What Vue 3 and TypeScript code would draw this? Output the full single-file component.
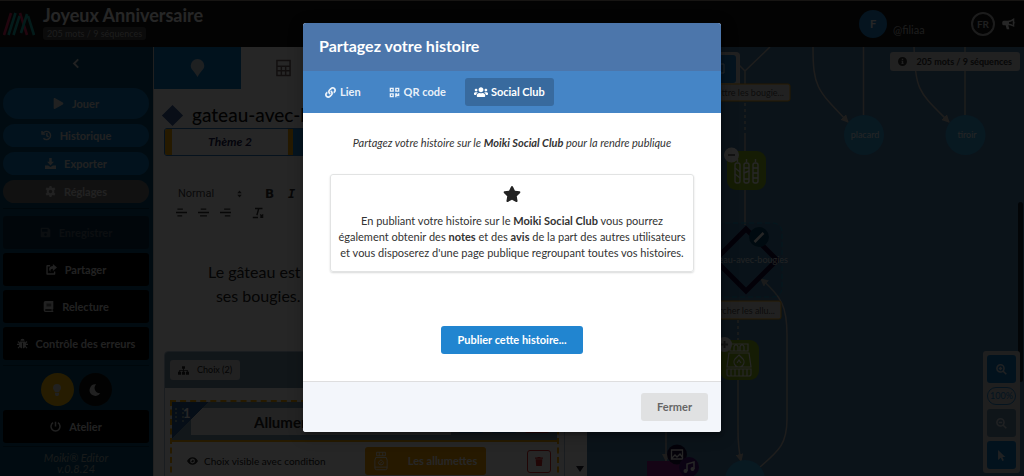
<script setup lang="ts">
import { h, ref } from 'vue'

type Glyph = { box: string; d: string; stroke?: number }

const glyphs: Record<string, Glyph> = {
  play: { box: '0 0 448 512', d: 'M424.4 214.7L72.4 6.6C43.8-10.3 0 6.1 0 47.9V464c0 37.5 40.7 60.1 72.4 41.3l352-208c31.4-18.5 31.5-64.1 0-82.6z' },
  star: { box: '0 0 576 512', d: 'M259.3 17.8L194 150.2 47.9 171.5c-26.2 3.8-36.7 36.1-17.7 54.6l105.7 103-25 145.5c-4.5 26.3 23.2 46 46.4 33.7L288 439.6l130.7 68.7c23.2 12.2 50.9-7.4 46.4-33.7l-25-145.5 105.7-103c19-18.5 8.5-50.8-17.7-54.6L382 150.2 316.7 17.8c-11.7-23.6-45.6-23.9-57.4 0z' },
  link: { box: '0 0 512 512', d: 'M326.612 185.391c59.747 59.809 58.927 155.698.36 214.59-.11.12-.24.25-.36.37l-67.2 67.2c-59.27 59.27-155.699 59.262-214.96 0-59.27-59.26-59.27-155.7 0-214.96l37.106-37.106c9.84-9.84 26.786-3.3 27.294 10.606.648 17.722 3.826 35.527 9.69 52.721 1.986 5.822.567 12.262-3.783 16.612l-13.087 13.087c-28.026 28.026-28.905 73.66-1.155 101.96 28.024 28.579 74.086 28.749 102.325.51l67.2-67.19c28.191-28.191 28.073-73.757 0-101.83-3.701-3.694-7.429-6.564-10.341-8.569a16.037 16.037 0 0 1-6.947-12.606c-.396-10.567 3.348-21.456 11.698-29.806l21.054-21.055c5.521-5.521 14.182-6.199 20.584-1.731a152.482 152.482 0 0 1 20.522 17.197zM467.547 44.449c-59.261-59.262-155.69-59.27-214.96 0l-67.2 67.2c-.12.12-.25.25-.36.37-58.566 58.892-59.387 154.781.36 214.59a152.454 152.454 0 0 0 20.521 17.196c6.402 4.468 15.064 3.789 20.584-1.731l21.054-21.055c8.35-8.35 12.094-19.239 11.698-29.806a16.037 16.037 0 0 0-6.947-12.606c-2.912-2.005-6.64-4.875-10.341-8.569-28.073-28.073-28.191-73.639 0-101.83l67.2-67.19c28.239-28.239 74.3-28.069 102.325.51 27.75 28.3 26.872 73.934-1.155 101.96l-13.087 13.087c-4.35 4.35-5.769 10.79-3.783 16.612 5.864 17.194 9.042 34.999 9.69 52.721.509 13.906 17.454 20.446 27.294 10.606l37.106-37.106c59.271-59.259 59.271-155.699.001-214.959z' },
  users: { box: '0 60 640 420', d: 'M96 224c35.3 0 64-28.7 64-64s-28.7-64-64-64-64 28.700-64 64 28.700 64 64 64zm448 0c35.300 0 64-28.700 64-64s-28.700-64-64-64-64 28.700-64 64 28.700 64 64 64zm32 32h-64c-17.600 0-33.500 7.100-45.100 18.600 40.300 22.100 68.900 62 75.100 109.400h66c17.700 0 32-14.300 32-32v-32c0-35.300-28.700-64-64-64zm-256 0c61.900 0 112-50.100 112-112S381.900 32 320 32 208 82.100 208 144s50.100 112 112 112zm76.800 32h-8.300c-20.800 10-43.900 16-68.500 16s-47.600-6-68.500-16h-8.300C179.600 288 128 339.600 128 403.200V432c0 26.500 21.500 48 48 48h288c26.500 0 48-21.500 48-48v-28.800c0-63.600-51.600-115.200-115.200-115.200zm-223.700-13.400C161.500 263.100 145.600 256 128 256H64c-35.300 0-64 28.700-64 64v32c0 17.700 14.300 32 32 32h65.900c6.300-47.400 34.900-87.300 75.200-109.400z' },
  qr: { box: '0 0 16 16', d: 'M1 1h6v6H1zM3 3v2h2V3zM9 1h6v6H9zM11 3v2h2V3zM1 9h6v6H1zM3 11v2h2v-2zM9 9h3v2h1V9h2v4h-4v2H9zM12 14h1v1h-1zM14 14h1v1h-1z' },
  left: { box: '0 0 16 16', d: 'M10.500 2L4.500 8l6 6', stroke: 2.8 },
  history: { box: '0 0 16 16', d: 'M3 4.500A6 6 0 1 1 3.500 12M1.500 1.500V6H6M8.500 4.500V8.500L11 10', stroke: 2 },
  download: { box: '0 0 16 16', d: 'M6.200 0h3.600v5.500H13L8 10.800 3 5.500h3.200zM0 11h4.500l3.500 2 3.500-2H16v5H0z' },
  cog: { box: '0 0 16 16', d: 'M6.600 0h2.800l.5 2.200 1.500.8 2.200-.7L15 4.700l-1.600 1.600v1.700 1.700L15 11.300l-1.400 2.400-2.200-.7-1.500.8-.5 2.200H6.600l-.5-2.200-1.500-.8-2.200.7L1 11.300l1.600-1.600V6.300L1 4.700l1.400-2.400 2.200.7 1.500-.8zM8 5.400a2.600 2.600 0 1 0 0 5.200 2.600 2.600 0 0 0 0-5.200z' },
  save: { box: '0 0 16 16', d: 'M2.500 1H12l3 3v9.500A1.500 1.500 0 0 1 13.500 15h-11A1.500 1.500 0 0 1 1 13.500v-11A1.500 1.500 0 0 1 2.500 1zM3 3v4h8V3zM8 9a2 2 0 1 0 0 4 2 2 0 0 0 0-4z' },
  share: { box: '0 0 16 16', d: 'M10 0l6 5-6 5V7C7 7 6 8 6.500 11.500 3 8 4.500 3.200 10 3zM2 1.500h4v2H2.500v10h9V11h2v3.500a1 1 0 0 1-1 1H1.500a1 1 0 0 1-1-1V3a1.500 1.500 0 0 1 1.500-1.500z' },
  book: { box: '0 0 16 16', d: 'M3.500 0H15v12h-1v2h1v2H3.500A2.500 2.500 0 0 1 1 13.500v-11A2.500 2.500 0 0 1 3.500 0zM5 4v1h7V4zM5 6.500v1h7v-1zM4 12a1 1 0 0 0 0 2h8.500v-2z' },
  bug: { box: '0 0 16 16', d: 'M5 4a3 3 0 0 1 6 0zM4 5h8v1.500l2-2 1.200 1.200L13 8v.5h3v1.700h-3l-.3 1.300 2.500 2.500-1.200 1.200-2.200-2C11 14.500 10 15 8.600 15V7H7.400v8C6 15 5 14.500 4.200 13.200l-2.200 2L.8 14l2.500-2.500L3 10.200H0V8.500h3V8L.8 5.700 2 4.500l2 2z' },
  bulb: { box: '0 0 16 16', d: 'M8 0a5.300 5.300 0 0 0-5.300 5.300C2.700 8 5 8.500 5.200 11h5.600c.2-2.500 2.500-3 2.500-5.700A5.300 5.300 0 0 0 8 0zM5.300 12h5.400v2L9.500 16h-3l-1.200-2z' },
  moon: { box: '0 0 16 16', d: 'M9.500.4A7.700 7.700 0 1 0 15 12.300 7 7 0 0 1 9.500.4z' },
  power: { box: '0 0 16 16', d: 'M4.500 2.500a6.500 6.500 0 1 0 7 0M8 1v7', stroke: 2.2 },
  pin: { box: '0 0 16 20', d: 'M8 0a7.500 7.500 0 0 0-7.500 7.500C.5 11.500 4 13 8 20c4-7 7.500-8.500 7.500-12.500A7.500 7.500 0 0 0 8 0z' },
  calc: { box: '0 0 16 18', d: 'M1 1h14v16H1zM1 7h14M1 12h14M5.700 7v10M10.300 7v10', stroke: 1.600 },
  sort: { box: '0 0 10 16', d: 'M5 1l4.500 5.500h-9zM5 15L.5 9.500h9z' },
  alignLeft: { box: '0 0 16 16', d: 'M2 3h8M0 8h16M2 13h7', stroke: 1.900 },
  alignCenter: { box: '0 0 16 16', d: 'M4 3h8M0 8h16M3 13h10', stroke: 1.900 },
  alignRight: { box: '0 0 16 16', d: 'M6 3h9M0 8h16M7 13h8', stroke: 1.900 },
  clean: { box: '0 0 16 16', d: 'M4 2h10M9 2L6.500 11M1 14h7M11 10l4 4M15 10l-4 4', stroke: 1.900 },
  sitemap: { box: '0 0 18 14', d: 'M6.500 0h5v4H9.700v2H16v3h2v5h-5V9h1.500V7.500H9.700V9h1.800v5h-5V9h1.800V7.500H3.500V9H5v5H0V9h2V6h6.300V4H6.500z' },
  eye: { box: '0 0 18 12', d: 'M9 0c4 0 7 2.500 9 6-2 3.500-5 6-9 6S2 9.500 0 6c2-3.500 5-6 9-6zM9 2a4 4 0 1 0 0 8 4 4 0 0 0 0-8zM9 4a2 2 0 1 1-2 2c1 0 2-.6 2-2z' },
  trash: { box: '0 0 14 16', d: 'M0 1h4l1-1h4l1 1h4v2H0zM1 4h12l-1 12H2z' },
  jar: { box: '0 0 16 22', d: 'M3 1h10v4H3zM6 1v4M10 1v4M2 7h12l1 3v9a2 2 0 0 1-2 2H3a2 2 0 0 1-2-2v-9zM1 18h14M8 9.500l3 3a3 3 0 1 1-6 0zM7 14l2-2', stroke: 1 },
  horn: { box: '0 0 18 16', d: 'M16 0v12C13 10 11 9.500 8 9.500l1.500 5.500H6L4.500 9.500H2A2 2 0 0 1 0 7.500v-2a2 2 0 0 1 2-2h5C10.500 3.500 13 2 16 0zM14 3.500c-2 1.200-3.500 1.600-5 1.700v2.600c2 .1 3.500.5 5 1.400zM16.500 4.500a2 2 0 0 1 0 3z' },
  info: { box: '0 0 16 16', d: 'M8 0a8 8 0 1 0 0 16A8 8 0 0 0 8 0zM6.800 3h2.400v2.200H6.800zM6 6.500h3.200V11H10v1.500H6V11h.8V8H6z' },
  zoomIn: { box: '0 0 16 16', d: 'M6.500 1.200a5.200 5.200 0 1 0 0 10.400 5.200 5.200 0 0 0 0-10.400zM10.500 10.500L15 15M4 6.400h5M6.500 4v5', stroke: 2.2 },
  zoomOut: { box: '0 0 16 16', d: 'M6.500 1.200a5.200 5.200 0 1 0 0 10.400 5.200 5.200 0 0 0 0-10.400zM10.500 10.500L15 15M4 6.400h5', stroke: 2.2 },
  pointer: { box: '0 0 12 16', d: 'M1 0l10.500 10.300H7.300l2.200 4.700-2.300 1-2.200-4.800L1 14.500z' }
}

const Icon = (props: { name: string }) => {
  const g = glyphs[props.name]
  return h('svg', { viewBox: g.box, 'aria-hidden': 'true' }, [
    h('path', g.stroke
      ? { d: g.d, fill: 'none', stroke: 'currentColor', 'stroke-width': g.stroke }
      : { d: g.d, fill: 'currentColor', 'fill-rule': 'evenodd' })
  ])
}
Icon.props = ['name']

const pills = [
  { label: 'Jouer', icon: 'play', kind: 'tall' },
  { label: 'Historique', icon: 'history', kind: '' },
  { label: 'Exporter', icon: 'download', kind: '' },
  { label: 'Réglages', icon: 'cog', kind: 'grey' }
]
const actions = [
  { label: 'Enregistrer', icon: 'save', disabled: true },
  { label: 'Partager', icon: 'share', disabled: false },
  { label: 'Relecture', icon: 'book', disabled: false },
  { label: 'Contrôle des erreurs', icon: 'bug', disabled: false }
]
const tabs = [
  { id: 'link', label: 'Lien', icon: 'link' },
  { id: 'qr', label: 'QR code', icon: 'qr' },
  { id: 'club', label: 'Social Club', icon: 'users' }
]
const activeTab = ref('club')
const choiceTitle = ref('Allumer')
</script>

<template>
  <div class="app">
    <header class="topbar">
      <svg class="logo" viewBox="0 0 32 24" aria-hidden="true">
        <g fill="none" stroke-width="2.600">
          <path d="M1 23L8 1M17 1l7 22" stroke="#e0255f" />
          <path d="M5.500 23l7-22M10.500 23l6-19M24 2l-6 19M25 4l6 19" stroke="#18b5b0" />
        </g>
      </svg>
      <div class="story">
        <h1>Joyeux Anniversaire</h1>
        <span class="count">205 mots / 9 séquences</span>
      </div>
      <span class="avatar">F</span>
      <span class="user">@filiaa</span>
      <button class="lang">FR</button>
      <button class="news" aria-label="Annonces"><Icon name="horn" /></button>
    </header>

    <div class="workspace">
      <nav class="sidebar">
        <button class="collapse" aria-label="Replier"><Icon name="left" /></button>
        <div class="stack pills">
          <button v-for="p in pills" :key="p.label" :class="['pill', p.kind]"><Icon :name="p.icon" />{{ p.label }}</button>
        </div>
        <hr />
        <div class="stack">
          <button v-for="a in actions" :key="a.label" class="block" :disabled="a.disabled"><Icon :name="a.icon" />{{ a.label }}</button>
        </div>
        <hr />
        <div class="modes">
          <button class="round light" aria-label="Clair"><Icon name="bulb" /></button>
          <button class="round" aria-label="Sombre"><Icon name="moon" /></button>
        </div>
        <button class="block"><Icon name="power" />Atelier</button>
        <hr class="tight" />
        <p class="version">Moiki® Editor<br />v.0.8.24</p>
      </nav>

      <main class="editor">
        <div class="modebar">
          <button class="on" aria-label="Séquence"><Icon name="pin" /></button>
          <button aria-label="Variables"><Icon name="calc" /></button>
        </div>
        <div class="sheet">
          <h2><i class="diamond"></i>gateau-avec-bougies</h2>
          <div class="themes">
            <button class="theme">Thème 2</button>
          </div>
          <div class="toolbar">
            <div class="tools">
              <span class="format">Normal <Icon name="sort" /></span>
              <button class="mark">B</button>
              <button class="mark slanted">I</button>
            </div>
            <div class="tools">
              <button aria-label="Gauche"><Icon name="alignLeft" /></button>
              <button aria-label="Centre"><Icon name="alignCenter" /></button>
              <button aria-label="Droite"><Icon name="alignRight" /></button>
              <button class="clean" aria-label="Effacer le style"><Icon name="clean" /></button>
            </div>
          </div>
          <p class="prose">Le gâteau est<br />ses bougies.</p>
          <section class="choices">
            <div class="choices-head"><button><Icon name="sitemap" />Choix (2)</button></div>
            <article class="choice">
              <div class="choice-head">
                <span class="rank">1</span>
                <input v-model="choiceTitle" aria-label="Titre du choix" />
                <span class="chip"></span><span class="chip"></span><span class="chip outline"></span>
              </div>
              <div class="condition">
                <Icon name="eye" />
                <span>Choix visible avec condition</span>
                <button class="object"><Icon name="jar" />Les allumettes</button>
                <button class="delete" aria-label="Supprimer"><Icon name="trash" /></button>
              </div>
            </article>
          </section>
        </div>
        <i class="scroll-down"></i>
      </main>

      <section class="canvas">
        <svg class="graph" aria-hidden="true">
          <defs>
            <marker id="tip" viewBox="0 0 8 8" refX="7" refY="4" markerWidth="8" markerHeight="8" markerUnits="userSpaceOnUse" orient="auto">
              <path d="M0 0l8 4-8 4z" fill="#c9c3bb" />
            </marker>
          </defs>
          <g transform="translate(-587 -47)">
            <g class="edges">
              <path d="M770 47l-25 24-10-10M745 71V84" />
              <path d="M745 103v32" stroke-dasharray="3 3" />
              <path d="M745 135v90" />
              <path d="M813 47c0 40 4 43 35 75" marker-end="url(#tip)" />
              <path d="M863.500 47v68M965 47v68" />
              <path d="M914 47c2 45 4 44 35 75" marker-end="url(#tip)" />
              <path d="M738 320v20" stroke-dasharray="3 3" />
              <path d="M738 380v50c0 15 1 22 3 31" marker-end="url(#tip)" />
              <path d="M760 467c20-17 27-24 27-48v-84c0-28-5-38-26-56" marker-end="url(#tip)" />
              <path d="M666 420v41" marker-end="url(#tip)" />
            </g>
            <rect x="695" y="52" width="45" height="42" rx="4" fill="#ddd" />
            <rect x="700" y="55" width="36" height="28" rx="3" fill="#2185d0" />
            <path d="M720 64h4v9h-4" fill="none" stroke="#fff" />
            <rect x="680" y="84" width="110" height="17" rx="2" fill="#ddd" stroke="#f2a50c" />
            <g fill="#38a5dc"><circle cx="864" cy="135" r="20" /><circle cx="965.500" cy="135" r="20" /><circle cx="745" cy="480" r="20" /></g>
            <g fill="#e6f2fa" text-anchor="middle"><text x="865" y="138">placard</text><text x="967" y="138">tiroir</text></g>
            <rect x="727" y="151" width="39" height="39" rx="9" fill="#8cb81e" />
            <g fill="none" stroke="#fff" stroke-width="1.400">
              <rect x="735" y="163" width="5" height="20" rx="2" /><rect x="744" y="163" width="5" height="20" rx="2" /><rect x="753" y="163" width="5" height="20" rx="2" />
              <path d="M737.500 162v-3M746.500 162v-3M755.500 162v-3M735 168l5 4M735 174l5 4M744 168h5M744 173l5-2M744 179h5M753 168h5M753 173h5M753 178h5" />
            </g>
            <circle cx="731.500" cy="155" r="7.500" fill="#fff" /><path d="M728 155h7" stroke="#777" stroke-width="2" />
            <rect x="708" y="223" width="74" height="74" rx="9" fill="#0d6b9c" fill-opacity=".15" stroke="#159fc9" stroke-dasharray="5 3" />
            <path d="M746 229l31 31-31 31-31-31z" fill="none" stroke="#1a0a3a" stroke-width="5" />
            <circle cx="759" cy="237" r="10" fill="#06456a" /><path d="M754.500 242l9-9" stroke="#fff" stroke-width="2.500" />
            <text x="788" y="263" text-anchor="end" fill="#dfe3ea">gateau-avec-bougies</text>
            <rect x="680" y="301" width="101" height="18" rx="2" fill="#ddd" stroke="#f2a50c" />
            <g fill="#555"><text x="784" y="96" text-anchor="end">Mettre les bougie...</text><text x="775" y="314" text-anchor="end">Chercher les allu...</text></g>
            <rect x="720" y="340" width="39" height="40" rx="9" fill="#8cb81e" />
            <g fill="none" stroke="#fff" stroke-width="1.200">
              <path d="M730 344h18v7h-18zM734 351v-4a2 2 0 0 1 4 0v4M740 351v-4a2 2 0 0 1 4 0v4M729 353h20l2 14h-24zM727 369h24v5a2 2 0 0 1-2 2h-20a2 2 0 0 1-2-2zM731 369v7M735 369v7M739 369v7M743 369v7M747 369v7M739 355l4 4a5 5 0 1 1-8 0zM737 363l2-3 2 3" />
            </g>
            <circle cx="724.500" cy="344.500" r="7.500" fill="#fff" /><path d="M721 344.500h7M724.500 341v7" stroke="#777" stroke-width="2" />
            <rect x="647" y="461" width="40" height="30" fill="#8a1f8c" />
            <circle cx="677" cy="454.500" r="10" fill="#1c1240" />
            <path d="M671.500 450h11v9h-11zM672 458l3-3 2 2 3-3 3 4" fill="none" stroke="#fff" stroke-width="1.300" />
            <circle cx="689" cy="467" r="10" fill="#491580" />
            <path d="M687 471v-7l7-2v7" fill="none" stroke="#fff" stroke-width="1.500" /><circle cx="685.500" cy="471" r="2" fill="#fff" /><circle cx="692.500" cy="469" r="2" fill="#fff" />
          </g>
        </svg>
        <div class="counter"><Icon name="info" />205 mots / 9 séquences</div>
        <i class="rail"></i>
        <div class="zoom">
          <button aria-label="Agrandir"><Icon name="zoomIn" /></button>
          <span>100%</span>
          <button aria-label="Réduire" disabled><Icon name="zoomOut" /></button>
          <button aria-label="Pointeur"><Icon name="pointer" /></button>
        </div>
      </section>
    </div>

    <div class="dimmer">
      <div class="modal" role="dialog" aria-modal="true" aria-labelledby="share-title">
        <h2 id="share-title">Partagez votre histoire</h2>
        <div class="tabs" role="tablist">
          <button v-for="t in tabs" :key="t.id" role="tab" :aria-selected="activeTab === t.id" :class="{ active: activeTab === t.id }" @click="activeTab = t.id">
            <Icon :name="t.icon" />{{ t.label }}
          </button>
        </div>
        <div class="body">
          <p class="intro">Partagez votre histoire sur le <b>Moiki Social Club</b> pour la rendre publique</p>
          <div class="card">
            <Icon name="star" />
            <p>En publiant votre histoire sur le <b>Moiki Social Club</b> vous pourrez également obtenir des <b>notes</b> et des <b>avis</b> de la part des autres utilisateurs et vous disposerez d'une page publique regroupant toutes vos histoires.</p>
          </div>
          <button class="publish">Publier cette histoire...</button>
        </div>
        <footer><button class="close">Fermer</button></footer>
      </div>
    </div>
  </div>
</template>

<style>
body { margin: 0; background: #fff; }
</style>

<style scoped>
* { box-sizing: border-box; }
.app { position: relative; height: 100vh; overflow: hidden; display: flex; flex-direction: column; font: 11px/16px Lato, "Liberation Sans", sans-serif; color: #222; }
button, input { font: inherit; color: inherit; margin: 0; padding: 0; border: 0; background: none; }
button { display: flex; align-items: center; justify-content: center; gap: 8px; cursor: pointer; }
h1, h2, p { margin: 0; }
svg { flex: none; display: block; width: 11px; height: 11px; }

.topbar { height: 47px; flex: none; display: flex; align-items: center; padding: 0 8px 0 3px; background: #151515; border-top: 1px solid #999080; color: #fff; }
.logo { width: 32px; height: 24px; margin-right: 8px; }
.story { flex: 1; align-self: flex-start; padding-top: 2px; }
h1 { font-size: 18px; line-height: 24px; }
.count { display: block; width: max-content; padding: 0 4px; border-radius: 3px; background: #4a4a4a; font-size: 9px; line-height: 13px; color: #bbb; }
.avatar { width: 28px; height: 28px; border-radius: 50%; background: #2185d0; font-weight: 700; line-height: 28px; text-align: center; }
.user { width: 78px; padding-top: 12px; margin-left: 6px; color: #bbb; }
.lang { width: 24px; height: 24px; border: 2px solid #bbb; border-radius: 50%; font-size: 10px; font-weight: 700; color: #ccc; }
.news { margin-left: 7px; }
.news svg { width: 14px; height: 12px; }

.workspace { flex: 1; min-height: 0; display: grid; grid-template-columns: 153px 434px minmax(0, 1fr); }
.sidebar { display: flex; flex-direction: column; padding: 0 4px 0 3px; background: #0d4c70; color: #ddd; }
.collapse { height: 32px; margin-bottom: 9px; }
.stack { display: flex; flex-direction: column; gap: 4px; }
.pills { gap: 5px; }
.pill, .block { font-weight: 700; }
.pill { height: 23px; border-radius: 16px; background: #127ac0; }
.pill.tall { height: 31px; }
.pill.grey { background: #767676; }
.block { height: 33px; flex: none; border-radius: 3px; background: #000; }
.block:disabled { background: #082d46; color: #4d5c6c; }
hr { width: 100%; height: 1px; border: 0; margin: 5px 0 7px; background: #06324c; }
hr.tight { margin: 3px 0 5px; }
.modes { display: flex; justify-content: center; gap: 5px; margin-bottom: 4px; }
.round { width: 33px; height: 33px; border-radius: 50%; background: #111; }
.round.light { background: #fbbd08; }
.round svg { width: 12px; height: 12px; }
.version { text-align: center; font-style: italic; line-height: 11px; color: #9aa; }

.editor { position: relative; overflow: hidden; background: #fff; border-left: 1px solid #d5d5d5; }
.modebar { display: flex; }
.modebar button { width: 20%; height: 42px; color: #766; }
.modebar .on { background: #0d79c4; color: #cbd5df; }
.modebar svg { width: 15px; height: 18px; }
.sheet { padding: 15px 22px 0 10px; }
.sheet h2 { display: flex; align-items: center; gap: 12px; padding-left: 1px; font-size: 19px; font-weight: 500; line-height: 22px; color: #111; }
.diamond { width: 15px; height: 15px; transform: rotate(45deg); background: #3c5f9c; }
.themes { height: 28px; margin-top: 2px; display: flex; border: 1px solid #287bc0; border-radius: 3px; background: #2185d0; overflow: hidden; }
.theme { width: 128px; border: solid #ffae00; border-width: 0 5px 0 7px; background: #fff; font-size: 12px; font-weight: 700; font-style: italic; color: #1b1b50; }
.toolbar { padding: 28px 0 0 12px; color: #333; }
.tools { display: flex; gap: 11px; height: 19px; align-items: center; }
.format { display: flex; align-items: center; justify-content: space-between; width: 66px; margin-right: 11px; padding-left: 2px; font: 11px/16px Roboto, sans-serif; color: #444; }
.format svg { width: 5px; height: 8px; }
.mark { width: 11px; font: 700 12px/16px "DejaVu Sans", sans-serif; }
.slanted { font-family: "DejaVu Sans Mono", monospace; font-style: italic; }
.clean { margin-left: 10px; }
.clean svg { width: 12px; height: 12px; }
.prose { width: max-content; padding: 38px 0 0 44px; font-size: 16px; line-height: 24px; text-align: right; color: #222; }
.choices { margin-top: 43px; height: 180px; overflow: hidden; border: 1px solid #b0c4d4; border-radius: 4px 4px 0 0; }
.choices-head { padding: 8px 5px; background: #7593a8; }
.choices-head button { height: 20px; padding: 0 8px; border-radius: 3px; background: #d9d9d9; font-size: 9px; }
.choice { margin: 12px 5px; border: 2px dashed #ffae00; }
.choice-head { position: relative; display: flex; align-items: start; gap: 7px; height: 40px; padding: 6px 7px 0 19px; background: #7b9ab0; border-bottom: 2px solid #ffae00; }
.rank { position: absolute; left: 0; top: 0; width: 37px; height: 36px; padding: 3px 0 0 11px; background: linear-gradient(135deg, #285d9b 50%, transparent 50%); font-size: 13px; font-weight: 700; color: #fff; }
.rank::before { content: ""; position: absolute; left: 3px; top: 6px; width: 5px; height: 14px; border: dotted #8aa; border-width: 0 2px; }
.choice-head input { flex: 1; min-width: 0; height: 27px; padding-left: 63px; background: #e8e8e8; font-size: 15px; font-weight: 700; }
.chip { width: 26px; height: 25px; border-radius: 3px; background: #2185d0; }
.outline { background: #fff; border: 1px solid #db2828; }
.condition { display: flex; align-items: center; height: 38px; padding: 0 6px 0 15px; }
.condition > svg { width: 11px; height: 8px; margin-right: 6px; }
.condition span { width: 161px; white-space: nowrap; font-size: 10px; }
.object { width: 121px; height: 28px; border-radius: 3px; background: #ffa500; color: #fff; gap: 20px; font-weight: 700; }
.object svg { width: 14px; height: 20px; }
.delete { width: 24px; height: 23px; margin-left: auto; border: 1px solid #db2828; border-radius: 3px; color: #db2828; }
.delete svg { width: 8px; height: 9px; }
.scroll-down { position: absolute; right: 3px; bottom: 4px; border: 4px solid transparent; border-top: 6px solid #223; border-bottom: 0; }

.canvas { position: relative; overflow: hidden; background: #4a7da8; }
.graph { position: absolute; inset: 0; width: 100%; height: 100%; font-size: 9px; }
.edges path { fill: none; stroke: #c9c3bb; stroke-width: 1.500; }
.counter { position: absolute; right: 4px; top: 5px; display: flex; align-items: center; gap: 9px; padding: 1px 8px; height: 19px; border-radius: 3px; background: #d9d9d9; font-size: 9px; font-weight: 700; color: #333; }
.counter svg { width: 9px; height: 9px; }
.rail { position: absolute; right: 1px; top: 155px; width: 5px; height: 180px; border-radius: 3px; background: #1a2430; }
.zoom { position: absolute; right: 4px; bottom: 3px; width: 37px; padding: 4px; display: flex; flex-direction: column; gap: 4px; border-radius: 3px; background: #d0d0d0; }
.zoom button { height: 28px; border-radius: 3px; background: #107bc4; color: #d5dde5; }
.zoom button:disabled { background: #668ca8; }
.zoom span { height: 18px; border: 1px solid #2185d0; border-radius: 9px; text-align: center; line-height: 16px; font-size: 9px; color: #2185d0; }

.dimmer { position: absolute; inset: 0; display: flex; align-items: flex-start; justify-content: center; padding: 23px 16px; background: rgba(0, 0, 0, .85); }
.modal { width: 100%; max-width: 418px; border-radius: 3px; overflow: hidden; background: #fff; box-shadow: 1px 3px 3px rgba(0, 0, 0, .2), 1px 3px 15px 2px rgba(0, 0, 0, .2); }
.modal h2 { padding: 11px 16px 13px; font-size: 16px; line-height: 24px; background: #4c76ab; color: #fff; }
.tabs { display: flex; gap: 10px; padding: 7px 13px; background: #4585c6; color: #fff; }
.tabs button { height: 28px; padding: 0 9px; gap: 4px; border-radius: 3px; font-weight: 700; color: rgba(255, 255, 255, .9); }
.tabs button.active { background: #386a9e; color: #fff; }
.tabs button:last-child { gap: 3px; }
.tabs button:last-child svg { width: 14px; }
.body { display: flex; flex-direction: column; align-items: center; padding: 22px 27px 27px; color: #333; }
.intro { font-style: italic; text-align: center; }
.card { width: 100%; margin: 23px 0 54px; padding: 10px 5px; border: 1px solid #e2e3e3; border-radius: 3px; box-shadow: 0 1px 2px #d8d9d9; text-align: center; }
.card svg { width: 18px; height: 18px; margin: 0 auto 10px; color: #222; }
.publish, .close { height: 28px; padding: 0 16px; border-radius: 3px; font-weight: 700; }
.publish { background: #2185d0; color: #fff; }
.close { background: #e0e1e2; color: #666; }
.modal footer { display: flex; justify-content: flex-end; padding: 11px 13px; border-top: 1px solid #dededf; background: #f3f6fb; }
</style>
